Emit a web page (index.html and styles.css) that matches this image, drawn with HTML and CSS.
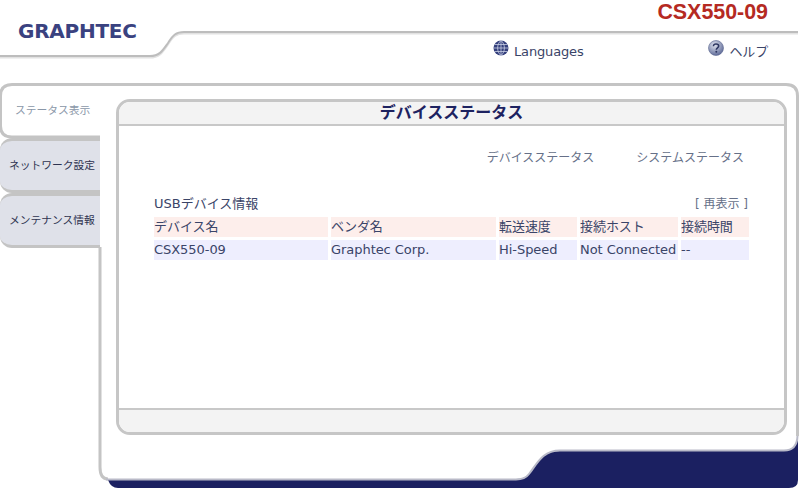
FILE: index.html
```html
<!DOCTYPE html>
<html lang="ja">
<head>
<meta charset="utf-8">
<title>CSX550-09</title>
<link rel="stylesheet" href="styles.css">
</head>
<body>
<div class="page">
<svg class="frame" width="809" height="494" viewBox="0 0 809 494" aria-hidden="true">
  <path class="navy" d="M108 479 L108 480 Q111 488 118 488 L789 488 Q798 488 798 480 L798 436 Q797 451 784 451 L560 451 C542 451 537 464 529 474 Q525 479 516 479 Z"/>
  <path class="hdrshade" d="M0 57.500 L150 57.500 C160 57.500 163 51.500 168 44.500 C173 36.500 176 33.500 184 33.500 L798 33.500"/>
  <path class="hdrline" d="M0 56 L150 56 C160 56 163 50 168 43 C173 35 176 32 184 32 L798 32"/>
  <path class="outer" d="M12 84.500 L786 84.500 Q797.500 84.500 797.500 96 L797.500 436"/>
  <path class="outer" d="M12 84.500 Q.5 84.500 .5 96 L.5 126 Q.5 137 12 137 L100 137"/>
  <path class="outer" d="M100 247 L100 467 Q100 479 108 479"/>
  <path class="edge" d="M797.500 436 Q797 450.500 784 450.500 L560 450.500 C542 450.500 537 464 529 474 Q525 479.500 516 479.500 L106 479.500"/>
</svg>
<header class="header">
  <div class="logo">GRAPHTEC</div>
  <div class="head-right">
    <div class="model">CSX550-09</div>
    <nav class="links">
      <a class="link lang">
        <svg class="icon" width="16" height="16" viewBox="0 0 16 16"><circle cx="8" cy="8" r="7.500" fill="#343f7c"/><path d="M.5 8H15.500M1.500 4.500H14.500M1.500 11.500H14.500M8 .5V15.500M8 .5C3.500 4 3.500 12 8 15.500M8 .5C12.500 4 12.500 12 8 15.500" fill="none" stroke="#c9cfe4" stroke-width=".8"/></svg>
        Languages
      </a>
      <a class="link help">
        <svg class="icon" width="16" height="16" viewBox="0 0 16 16"><defs><radialGradient id="hg" cx=".4" cy=".3" r=".8"><stop offset="0" stop-color="#dfe3ee"/><stop offset="1" stop-color="#4f5c8e"/></radialGradient></defs><circle cx="8" cy="8" r="7.500" fill="url(#hg)" stroke="#5a668f" stroke-width=".6"/><path d="M5.400 6.200C5.500 4.700 6.700 4 8 4C9.500 4 10.700 4.800 10.700 6.100C10.700 7.800 8.300 7.900 8.300 9.700" fill="none" stroke="#2c3560" stroke-width="1.500"/><circle cx="8.300" cy="11.800" r="1" fill="#2c3560"/></svg>
        ヘルプ
      </a>
    </nav>
  </div>
</header>
<main class="main">
  <aside class="tabs">
    <div class="tab active">ステータス表示</div>
    <div class="tab">ネットワーク設定</div>
    <div class="tab">メンテナンス情報</div>
  </aside>
  <section class="panel">
    <h1 class="panel-title">デバイスステータス</h1>
    <div class="panel-body">
      <div class="subnav">
        <span>デバイスステータス</span>
        <span>システムステータス</span>
      </div>
      <div class="info-head">
        <span>USBデバイス情報</span>
        <span class="refresh">[ 再表示 ]</span>
      </div>
      <table class="info">
        <thead>
          <tr>
            <th class="c1">デバイス名</th>
            <th class="c2">ベンダ名</th>
            <th class="c3">転送速度</th>
            <th class="c4">接続ホスト</th>
            <th class="c5">接続時間</th>
          </tr>
        </thead>
        <tbody>
          <tr>
            <td>CSX550-09</td>
            <td>Graphtec Corp.</td>
            <td>Hi-Speed</td>
            <td>Not Connected</td>
            <td>--</td>
          </tr>
        </tbody>
      </table>
    </div>
    <div class="panel-foot"></div>
  </section>
</main>
</div>
</body>
</html>
```
FILE: styles.css
```css
* { box-sizing: border-box; }
html, body { margin: 0; padding: 0; background: #fff; }
body { font-family: "DejaVu Sans", "Noto Sans CJK JP", sans-serif; color: #3a4468; }
.page { position: relative; width: 809px; height: 494px; overflow: hidden; }
.frame { position: absolute; left: 0; top: 0; }
.navy { fill: #1b2061; }
.hdrline { fill: none; stroke: #bdbdbd; stroke-width: 2; }
.hdrshade { fill: none; stroke: #e2e2e2; stroke-width: 2; }
.outer { fill: none; stroke: #c4c4c4; stroke-width: 3; }
.edge { fill: none; stroke: #b9bac8; stroke-width: 2; }

.header { position: relative; height: 84px; display: flex; justify-content: space-between; }
.logo { margin: 18px 0 0 18px; font: bold 20px/26px "DejaVu Sans", sans-serif; letter-spacing: -.25px; color: #3a4280; }
.head-right { width: 330px; padding: 0 41px 0 14px; display: flex; flex-direction: column; }
.model { height: 26px; text-align: right; font: bold 21.400px/25px "Liberation Sans", sans-serif; color: #b52a22; }
.links { display: flex; justify-content: space-between; align-items: center; margin-top: 14px; }
.link { font-size: 13px; line-height: 24px; letter-spacing: -.15px; display: flex; align-items: center; gap: 5px; color: #3a4468; }
.link .icon { margin-top: -9px; }

.main { position: relative; display: flex; align-items: flex-start; }
.tabs { width: 100px; display: flex; flex-direction: column; }
.tab { height: 55px; font: 10.750px/47px "Noto Sans CJK JP", sans-serif; padding-left: 9px; background: #dfe1e9; border: 3px solid #c4c4c4; border-width: 3px 0; border-radius: 12px 0 0 12px; color: #2e3350; white-space: nowrap; }
.tab.active { height: 54px; background: transparent; border: 0; border-radius: 0; color: #8a97a8; padding-left: 15px; line-height: 52px; }

.panel { margin: 15px 0 0 16px; width: 671px; height: 336px; border: 3px solid #c6c6c6; border-radius: 14px; background: #fff; display: flex; flex-direction: column; overflow: hidden; }
.panel-title { margin: 0; height: 24px; background: #f3f3f3; border-bottom: 2px solid #c8c8c8; text-align: center; font: bold 16px/18px "Noto Sans CJK JP", sans-serif; color: #1d2260; }
.panel-body { flex: 1; padding: 0 35px; }
.subnav { display: flex; justify-content: flex-end; gap: 42px; padding: 20px 5px 0 0; font: 12px/22px "Noto Sans CJK JP", sans-serif; color: #667088; }
.info-head { display: flex; justify-content: space-between; margin-top: 26px; font-size: 13px; line-height: 20px; }
.refresh { font-size: 12px; color: #667088; margin-right: 1px; }
.info { border-collapse: separate; border-spacing: 3px; width: 601px; table-layout: fixed; font-size: 13px; letter-spacing: -.05px; margin: 0 0 0 -3px; }
.info th, .info td { height: 20px; padding: 0; font-weight: normal; text-align: left; line-height: 18px; white-space: nowrap; overflow: hidden; }
.info th { background: #fdeeeb; }
.info td { background: #eeeefe; }
.c1 { width: 174px; }
.c2 { width: 165px; }
.c3 { width: 78px; }
.c4 { width: 98px; }
.c5 { width: 68px; }
.panel-foot { height: 24px; background: #f3f3f3; border-top: 2px solid #c8c8c8; }
```
